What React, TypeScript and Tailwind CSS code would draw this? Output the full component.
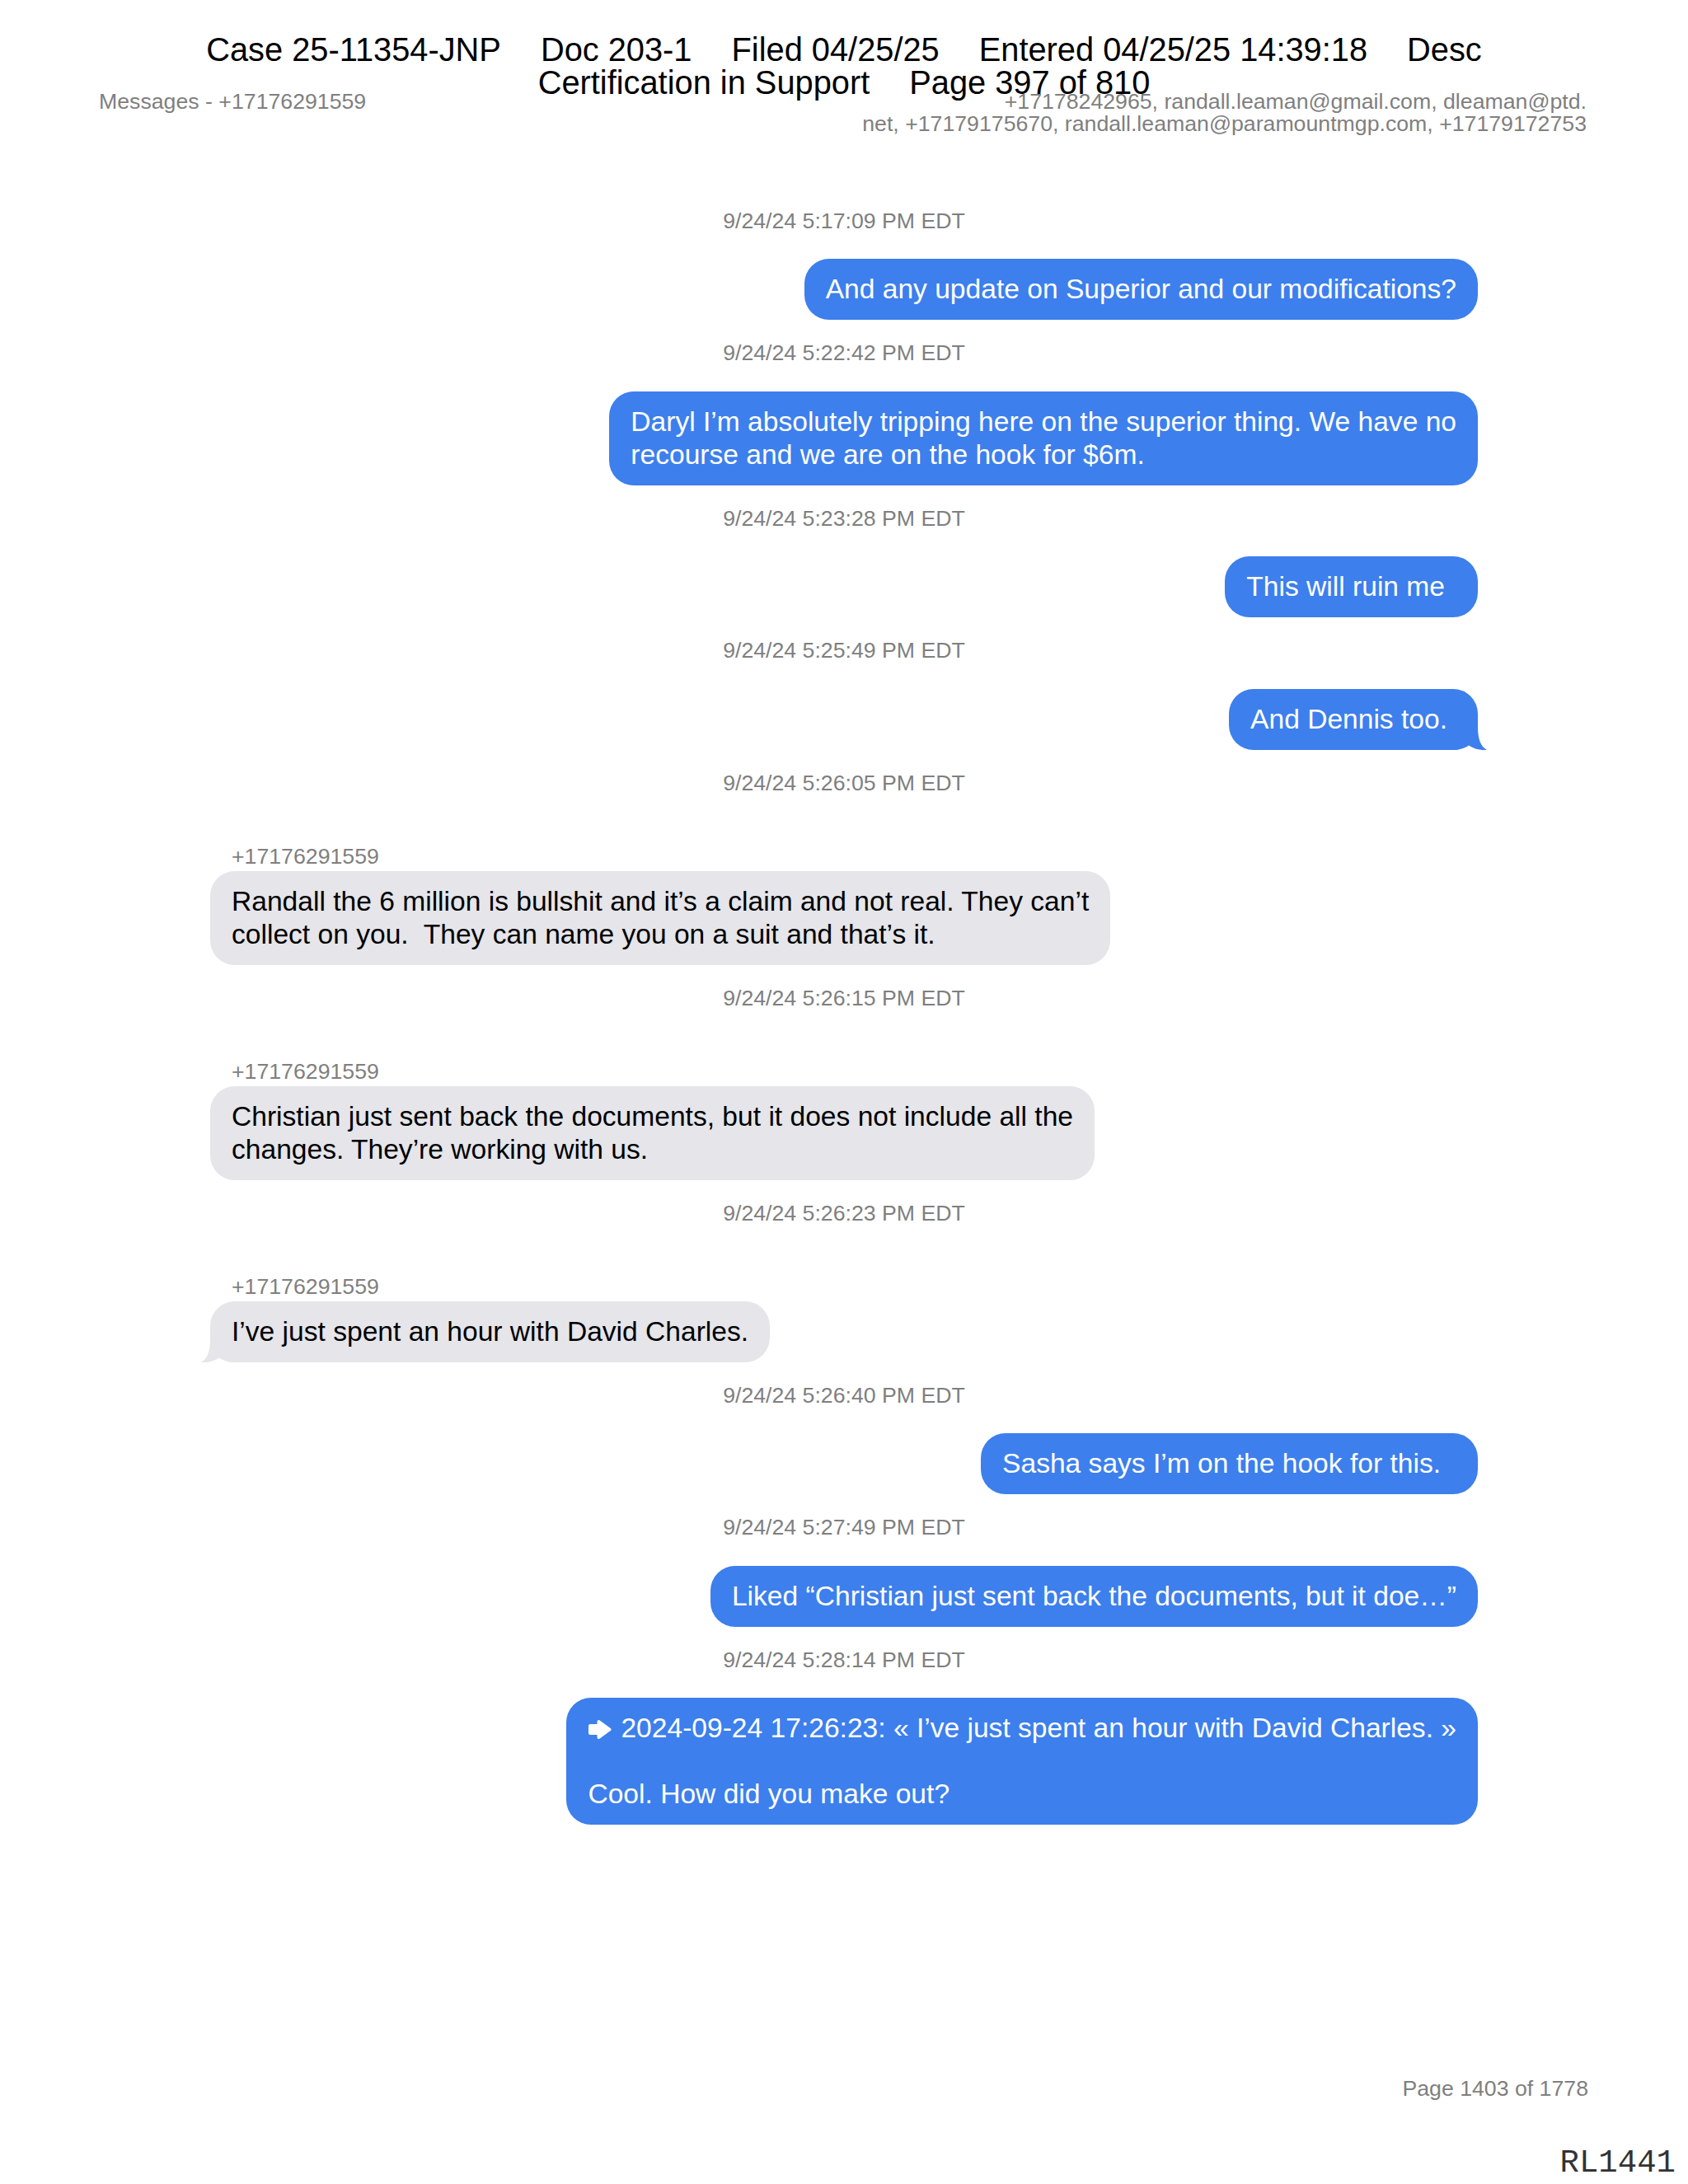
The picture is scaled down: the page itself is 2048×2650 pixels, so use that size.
import clsx from "clsx";
import type { ReactNode } from "react";

type Entry = {
  time: string;
  sent: boolean;
  tail?: boolean;
  pad?: string;
  body: ReactNode;
};

const SENDER = "+17176291559";

function ForwardArrow() {
  return (
    <svg
      width="29"
      height="25"
      viewBox="0 0 29 25"
      className="mr-[11px] inline-block align-[-3px]"
    >
      <path
        d="M3 8 H13.5 V3 L26.5 12.5 L13.5 22 V17 H3 Z"
        fill="white"
        stroke="white"
        strokeWidth="4"
        strokeLinejoin="round"
      />
    </svg>
  );
}

const thread: Entry[] = [
  {
    time: "9/24/24 5:17:09 PM EDT",
    sent: true,
    body: "And any update on Superior and our modifications?",
  },
  {
    time: "9/24/24 5:22:42 PM EDT",
    sent: true,
    body: "Daryl I\u2019m absolutely tripping here on the superior thing. We have no\nrecourse and we are on the hook for $6m.",
  },
  { time: "9/24/24 5:23:28 PM EDT", sent: true, pad: "pr-[40px]", body: "This will ruin me" },
  { time: "9/24/24 5:25:49 PM EDT", sent: true, tail: true, pad: "pr-[37px]", body: "And Dennis too." },
  {
    time: "9/24/24 5:26:05 PM EDT",
    sent: false,
    body: "Randall the 6 million is bullshit and it\u2019s a claim and not real. They can\u2019t\ncollect on you.  They can name you on a suit and that\u2019s it.",
  },
  {
    time: "9/24/24 5:26:15 PM EDT",
    sent: false,
    body: "Christian just sent back the documents, but it does not include all the\nchanges. They\u2019re working with us.",
  },
  {
    time: "9/24/24 5:26:23 PM EDT",
    sent: false,
    tail: true,
    body: "I\u2019ve just spent an hour with David Charles.",
  },
  {
    time: "9/24/24 5:26:40 PM EDT",
    sent: true,
    pad: "pr-[45px]",
    body: "Sasha says I\u2019m on the hook for this.",
  },
  {
    time: "9/24/24 5:27:49 PM EDT",
    sent: true,
    body: "Liked \u201cChristian just sent back the documents, but it doe\u2026\u201d",
  },
  {
    time: "9/24/24 5:28:14 PM EDT",
    sent: true,
    body: (
      <>
        <ForwardArrow />
        {"2024-09-24 17:26:23: \u00ab I\u2019ve just spent an hour with David Charles. \u00bb\n\nCool. How did you make out?"}
      </>
    ),
  },
];

function Tail({ sent }: { sent: boolean }) {
  if (sent) {
    return (
      <svg width="42" height="44" viewBox="0 0 42 44" className="absolute bottom-0 right-[-12px]">
        <path
          d="M0 0 H30 V16 C30 32 34 40 41 44 C34 44.5 26 43 19 38.5 C14 42 8 44 0 44 Z"
          fill="#3d7fec"
        />
      </svg>
    );
  }
  return (
    <svg width="42" height="44" viewBox="0 0 42 44" className="absolute bottom-0 left-[-12px]">
      <path
        d="M42 0 H12 V16 C12 32 8 40 1 44 C8 44.5 16 43 23 38.5 C28 42 34 44 42 44 Z"
        fill="#e5e5ea"
      />
    </svg>
  );
}

function Bubble({ entry }: { entry: Entry }) {
  return (
    <div
      className={clsx(
        "relative w-fit rounded-[30px] pl-[26px] py-[17px] text-[33.6px] leading-[40px] whitespace-pre",
        entry.pad ?? "pr-[26px]",
        entry.sent ? "self-end bg-[#3d7fec] text-white" : "self-start bg-[#e5e5ea] text-black"
      )}
    >
      <span className="relative z-10">{entry.body}</span>
      {entry.tail && <Tail sent={entry.sent} />}
    </div>
  );
}

export default function App() {
  return (
    <div className="relative flex h-[2650px] w-[2048px] flex-col bg-white font-['Liberation_Sans',Arial,sans-serif]">
      {/* page header */}
      <div className="flex items-start justify-between pt-[110px] pl-[120px] pr-[123px] text-[26.7px] leading-[27px] text-[#7f7f7f]">
        <div>Messages - {SENDER}</div>
        <div className="text-right">
          <div>+17178242965, randall.leaman@gmail.com, dleaman@ptd.</div>
          <div>net, +17179175670, randall.leaman@paramountmgp.com, +17179172753</div>
        </div>
      </div>

      {/* conversation */}
      <div className="mt-[88.5px] flex flex-col px-[255px]">
        {thread.map((entry, i) => (
          <div key={i} className="flex flex-col">
            <div
              className={clsx(
                "text-center text-[26.7px] leading-[30px] text-[#7f7f7f]",
                i > 0 && "mt-[25px]"
              )}
            >
              {entry.time}
            </div>
            {entry.sent ? (
              <div className="mt-[31.5px] flex flex-col">
                <Bubble entry={entry} />
              </div>
            ) : (
              <div className="mt-[59px] flex flex-col">
                <div className="pl-[26px] text-[26.7px] leading-[30px] text-[#7f7f7f]">{SENDER}</div>
                <div className="mt-[3px] flex flex-col">
                  <Bubble entry={entry} />
                </div>
              </div>
            )}
          </div>
        ))}
      </div>

      {/* footer */}
      <div className="mt-auto pb-[5px]">
        <div className="pr-[121px] text-right text-[26.7px] leading-[27px] text-[#7f7f7f]">
          Page 1403 of 1778
        </div>
        <div className="mt-[57px] pr-[15px] text-right font-['Liberation_Mono','Courier_New',monospace] text-[39px] leading-[40px] text-[#333333]">
          RL1441
        </div>
      </div>

      {/* court filing stamp */}
      <div className="absolute inset-x-0 top-[40px] z-20 flex flex-col items-center text-[39.8px] leading-[40px] text-black">
        <div className="flex gap-[48px] whitespace-pre">
          <span>Case 25-11354-JNP</span>
          <span>Doc 203-1</span>
          <span>Filed 04/25/25</span>
          <span>Entered 04/25/25 14:39:18</span>
          <span>Desc</span>
        </div>
        <div className="flex gap-[48px] whitespace-pre">
          <span>Certification in Support</span>
          <span>Page 397 of 810</span>
        </div>
      </div>
    </div>
  );
}
